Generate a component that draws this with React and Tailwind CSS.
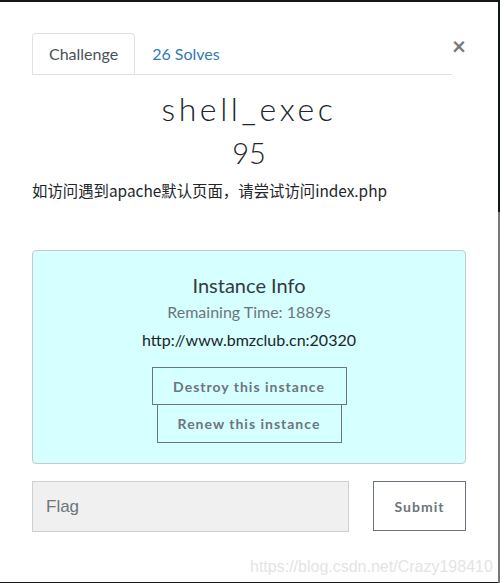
import React from 'react'

const lato = { fontFamily: 'Lato, "Noto Sans", sans-serif' }

const App = () => {
  return (
    <div className="w-[500px] h-[583px] bg-[#15181b] relative overflow-hidden flex" style={lato}>
      {/* modal */}
      <div className="w-[498px] h-[580px] mt-[2px] bg-white flex flex-col px-[32px]">
        {/* tabs */}
        <div className="flex items-start mt-[31px]">
          <div className="flex w-[420px] border-b border-[#dee2e6]">
            <div className="h-[41px] px-[16px] flex items-center border border-b-0 border-[#dee2e6] rounded-t-[4px] text-[16px] text-[#495057] -mb-px bg-white">
              Challenge
            </div>
            <div className="h-[41px] pl-[17px] flex items-center text-[16px] text-[#337ab7]">
              26 Solves
            </div>
          </div>
          <button className="ml-auto mt-[1px] w-[14px] text-[24px] leading-none text-[#777] font-bold">×</button>
        </div>

        {/* title */}
        <h2 className="text-center text-[32px] font-light tracking-[3.6px] text-[#212529] mt-[14px] leading-[40px]">
          shell_exec
        </h2>
        <h3 className="text-center text-[29px] font-light text-[#212529] mt-[6px] leading-[36px]">95</h3>
        <p
          className="text-[15.4px] text-[#212529] mt-[8px] leading-[22px]"
          style={{ fontFamily: '"Noto Sans CJK SC", "Noto Sans", sans-serif' }}
        >
          如访问遇到apache默认页面，请尝试访问index.php
        </p>

        {/* instance info */}
        <div className="mt-[49px] h-[214px] bg-[#d6ffff] border border-[#c3cccc] rounded-[4px] flex flex-col items-center pt-[19px]">
          <div className="text-[20px] text-[#343a40] leading-[30px]">Instance Info</div>
          <div className="text-[16px] text-[#6c757d] mt-[0px] leading-[24px]">Remaining Time: 1889s</div>
          <div className="text-[16px] text-[#212529] mt-[4px] leading-[24px]">http://www.bmzclub.cn:20320</div>
          <button className="mt-[15px] w-[195px] h-[38px] border border-[#6c757d] text-[14px] font-bold tracking-[1px] text-[#6c757d]">
            Destroy this instance
          </button>
          <button className="-mt-px w-[185px] h-[39px] border border-[#6c757d] text-[14px] font-bold tracking-[1px] text-[#6c757d]">
            Renew this instance
          </button>
        </div>

        {/* flag form */}
        <div className="flex mt-[17px] items-start">
          <div
            className="w-[317px] h-[51px] bg-[#f0f0f0] border border-[#ccd0d5] flex items-center pl-[13px] text-[17px] text-[#6c757d]"
            style={{ fontFamily: '"Liberation Sans", Arial, sans-serif' }}
          >
            Flag
          </div>
          <button className="ml-auto w-[93px] h-[50px] border border-[#6c757d] text-[14px] font-bold tracking-[1px] text-[#6c757d]">
            Submit
          </button>
        </div>
      </div>

      {/* scrollbar strip */}
      <div className="w-[2px] flex flex-col">
        <div className="h-[212px]" />
        <div className="flex-1 bg-[#707a80]" />
      </div>

      {/* watermark */}
      <div
        className="absolute left-[250px] top-[557px] text-[16px] text-[#e4e4e4] leading-[20px]"
        style={{ fontFamily: '"Liberation Sans", Arial, sans-serif' }}
      >
        https://blog.csdn.net/Crazy198410
      </div>
    </div>
  )
}

export default App
